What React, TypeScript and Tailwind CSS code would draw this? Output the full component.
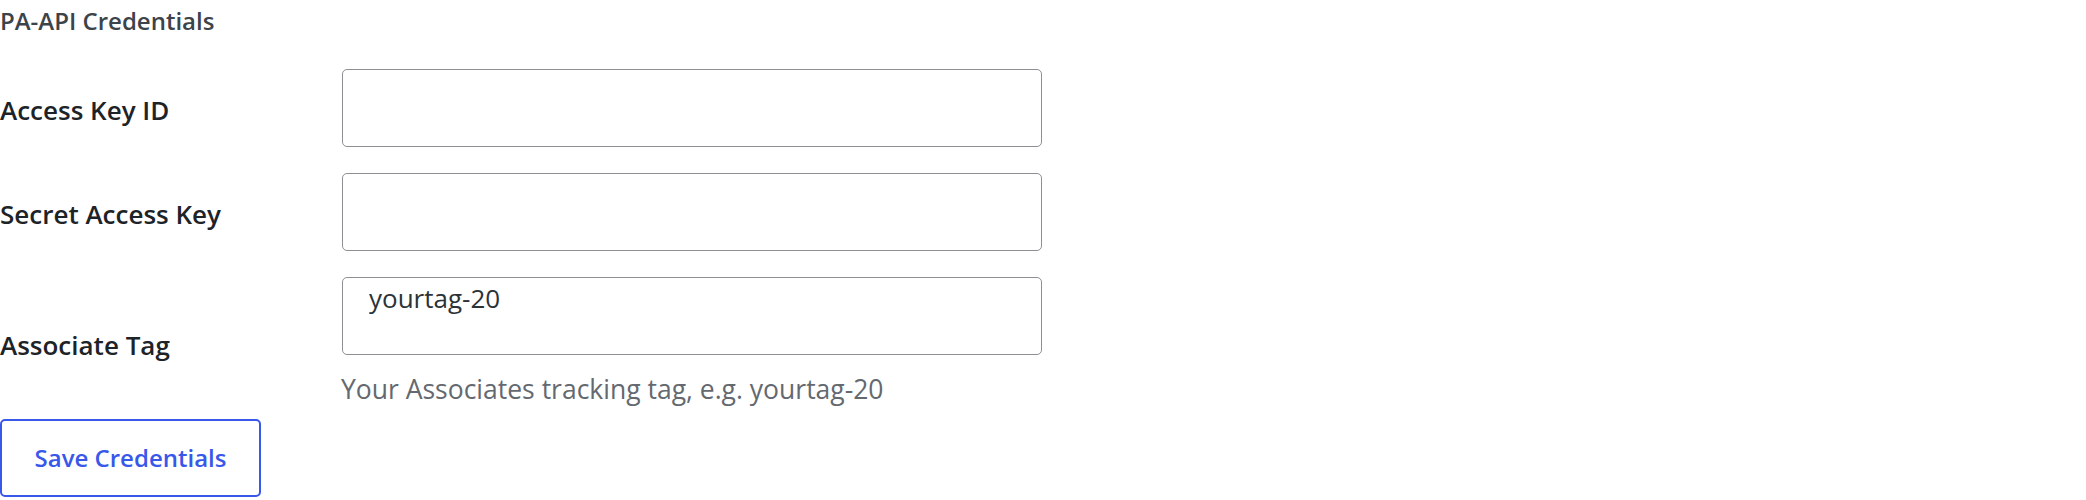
import React from 'react';

const fieldClass =
  'h-[78px] w-[700px] rounded-[5px] border border-[#8c8f94] bg-white px-[26px] text-[26px] text-[#2c3338] outline-none';

const labelClass = 'pt-[5px] text-[26px] font-semibold text-[#1d2327]';

const CredentialsForm = () => {
  return (
    <div className="min-h-[500px] bg-white font-['Open_Sans',sans-serif]">
      {/* Section title */}
      <h2 className="pt-[6px] text-[24px] font-semibold leading-[30px] text-[#3c434a]">PA-API Credentials</h2>

      {/* Fields */}
      <div className="mt-[33px] grid grid-cols-[342px_700px] items-center gap-y-[26px]">
        <label className={labelClass}>Access Key ID</label>
        <input type="text" className={fieldClass} />

        <label className={labelClass}>Secret Access Key</label>
        <input type="password" className={fieldClass} />

        <label className={labelClass}>Associate Tag</label>
        <div>
          <input
            type="text"
            defaultValue="yourtag-20"
            className="h-[78px] w-[700px] rounded-[5px] border border-[#8c8f94] bg-white px-[26px] pt-0 pb-[36px] text-[26px] text-[#2c3338] outline-none"
          />
          <p className="mt-[14px] -ml-px text-[26.5px] leading-[40px] text-[#646970]">
            Your Associates tracking tag, e.g. yourtag-20
          </p>
        </div>
      </div>

      <button className="mt-[10px] h-[78px] w-[261px] rounded-[5px] border-2 border-[#3858e9] bg-white text-[24px] font-semibold text-[#3858e9]">
        Save Credentials
      </button>
    </div>
  );
};

export default function App() {
  return <CredentialsForm />;
}
